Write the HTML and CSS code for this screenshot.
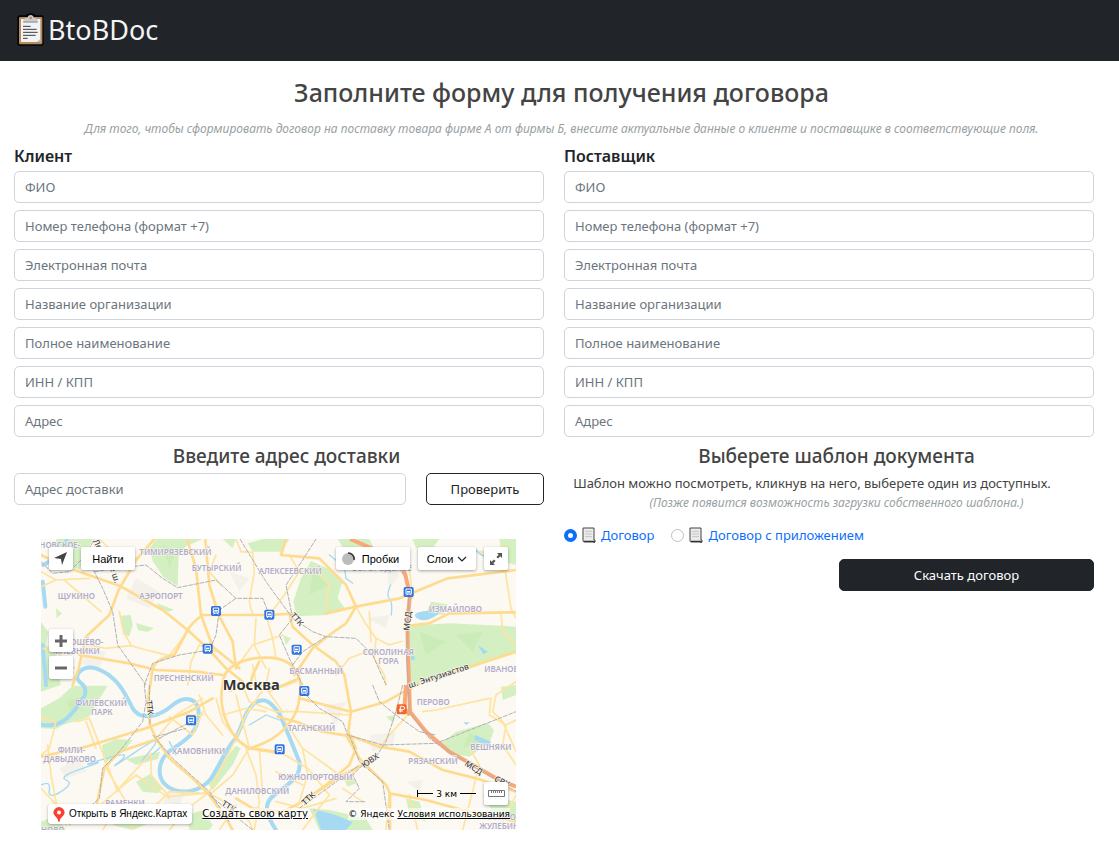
FILE: index.html
```html
<!DOCTYPE html>
<html lang="ru">
<head>
<meta charset="utf-8">
<meta name="viewport" content="width=device-width, initial-scale=1">
<title>BtoBDoc</title>
<link rel="stylesheet" href="styles.css">
</head>
<body>
<header class="navbar">
  <a class="brand" href="#">
    <svg class="brand-icon" viewBox="51 39 81 99" aria-hidden="true">
      <path d="M58 46H76Q82 40 92 40T108 46H126Q131 46 131 52V131Q131 137 125 137H58Q52 137 52 131V52Q52 46 58 46Z" fill="#050505"/>
      <rect x="57" y="51" width="70" height="82" rx="4" fill="#b98a60"/>
      <path d="M63 57H121V126H63Z" fill="#f3f3f4"/>
      <path d="M121 117V126H110Z" fill="#b9bcc0"/>
      <path d="M70 68V60Q70 56 76 55L83 53Q84 45 92 45T101 53L108 55Q113 56 113 60V68Z" fill="#c9cbce"/>
      <path d="M70 66H113" stroke="#8f9398" stroke-width="3"/>
      <circle cx="92" cy="54" r="4" fill="#b98a60"/>
      <path d="M69 79H92M69 88H110M69 97H113M69 106H107M69 115H83" stroke="#3c3f43" stroke-width="3"/>
    </svg>
    <span>BtoBDoc</span>
  </a>
</header>

<main class="page">
  <div class="intro">
    <h1 class="title">Заполните форму для получения договора</h1>
    <p class="hint">Для того, чтобы сформировать договор на поставку товара фирме А от фирмы Б, внесите актуальные данные о клиенте и поставщике в соответствующие поля.</p>
  </div>

  <form class="columns">
    <fieldset class="party">
      <legend class="party-title">Клиент</legend>
      <div class="fields">
        <input class="field" type="text" placeholder="ФИО" aria-label="ФИО клиента">
        <input class="field" type="tel" placeholder="Номер телефона (формат +7)" aria-label="Номер телефона клиента">
        <input class="field" type="email" placeholder="Электронная почта" aria-label="Электронная почта клиента">
        <input class="field" type="text" placeholder="Название организации" aria-label="Название организации клиента">
        <input class="field" type="text" placeholder="Полное наименование" aria-label="Полное наименование клиента">
        <input class="field" type="text" placeholder="ИНН / КПП" aria-label="ИНН / КПП клиента">
        <input class="field" type="text" placeholder="Адрес" aria-label="Адрес клиента">
      </div>
    </fieldset>
    <fieldset class="party">
      <legend class="party-title">Поставщик</legend>
      <div class="fields">
        <input class="field" type="text" placeholder="ФИО" aria-label="ФИО поставщика">
        <input class="field" type="tel" placeholder="Номер телефона (формат +7)" aria-label="Номер телефона поставщика">
        <input class="field" type="email" placeholder="Электронная почта" aria-label="Электронная почта поставщика">
        <input class="field" type="text" placeholder="Название организации" aria-label="Название организации поставщика">
        <input class="field" type="text" placeholder="Полное наименование" aria-label="Полное наименование поставщика">
        <input class="field" type="text" placeholder="ИНН / КПП" aria-label="ИНН / КПП поставщика">
        <input class="field" type="text" placeholder="Адрес" aria-label="Адрес поставщика">
      </div>
    </fieldset>

    <section class="delivery">
      <h2 class="subtitle">Введите адрес доставки</h2>
      <div class="address-row">
        <input class="field" type="text" placeholder="Адрес доставки" aria-label="Адрес доставки">
        <button class="btn btn-outline" type="button">Проверить</button>
      </div>
      <div class="map">
        <svg class="map-canvas" viewBox="15 12 1425 873" role="img" aria-label="Карта Москвы">
          <defs>
            <g id="station"><rect x="-15" y="-15" width="30" height="30" rx="5" fill="#2f72e0"/><path d="M-8-9H8V6H-8ZM-7 10L-3 6M7 10L3 6" fill="none" stroke="#fff" stroke-width="3"/><path d="M-5-3H5V2H-5Z" fill="#fff"/></g>
          </defs>
          <rect x="15" y="12" width="1425" height="873" fill="#fbf9f2"/>
          <g fill="#f4f1ea">
            <path d="M150 330L210 350 190 400 140 390ZM300 130L370 170 340 220 270 190ZM580 110L640 130 610 170ZM1050 90L1090 120 1060 160ZM1000 600L1080 590 1070 630 1010 650ZM70 700L130 670 150 710 90 730ZM400 760L450 770 430 810 380 800ZM1110 740L1160 735 1150 770ZM860 510L930 500 900 570ZM990 250L1060 240 1050 280Z"/>
          </g>
          <g fill="#d4f0c3">
            <path d="M60 12H170L150 60 130 104 105 95 66 52Z"/>
            <path d="M362 12H500L450 34 428 62 425 154 382 126 350 78 340 40Z"/>
            <path d="M635 25L680 12H760L735 50H650Z"/>
            <path d="M255 242L284 240 290 270 280 304 262 300ZM300 264L354 280 334 291 306 285ZM364 205L414 224 398 230 366 218ZM60 220L78 235 62 250Z"/>
            <path d="M15 260L36 290 30 330 62 360 74 450 15 470Z"/>
            <path d="M825 78L885 105 920 135 905 190 930 225 870 240 782 244 772 200 795 130Z"/>
            <path d="M905 12H1000L1020 52 960 62 925 45Z"/>
            <path d="M1120 272L1240 265 1440 275V355L1360 380 1210 434 1120 449Z"/>
            <path d="M1130 12H1210L1190 40 1140 40ZM1390 12H1440V90L1400 80ZM1185 200L1235 208 1225 240 1170 235Z"/>
            <path d="M1208 630L1260 590 1355 564 1374 585 1362 620 1300 665 1245 655Z"/>
            <path d="M1395 455L1440 450V480L1400 495ZM1340 780L1440 800V860L1370 830Z"/>
            <path d="M15 520L70 490 110 452H215L185 500 160 545 80 570 60 582 15 580Z"/>
            <path d="M198 630L240 612 290 615 262 650 205 685ZM300 740L345 716 380 760 365 775 320 770ZM15 860L60 842 90 885H15Z"/>
            <path d="M515 745L560 680 600 632 614 640 590 690 530 765ZM270 672L350 655 372 650 366 672 300 690Z"/>
            <path d="M240 830L330 820 350 860 290 885 230 870ZM455 840L500 825 530 870 520 885H460Z"/>
            <path d="M820 820L880 825 990 850 1010 885H850ZM1110 790L1150 800 1170 860 1120 840ZM925 735L950 728 960 745 935 755Z"/>
            <path d="M560 12L600 12 590 40ZM740 300L765 310 750 330ZM1050 545L1078 540 1072 565Z"/>
          </g>
          <g fill="#bfe5ab" opacity=".4">
            <path d="M1150 290L1230 320 1170 360ZM1260 300L1340 290 1310 350ZM830 110L880 150 820 180ZM1300 590L1340 620 1280 640ZM380 30L420 50 400 100ZM90 500L150 480 110 540Z"/>
          </g>
          <g fill="none" stroke="#a6daf3" stroke-linecap="round" stroke-linejoin="round">
            <path stroke-width="12" d="M22 90Q60 70 76 45T92 12M20 140L28 215M20 330L30 450M15 568C65 580 90 555 112 530C145 490 165 465 130 440C110 420 140 390 180 400C240 420 265 470 290 520C315 560 370 545 410 510C450 478 490 490 488 540C485 600 440 620 398 650C365 680 360 730 395 755C440 785 500 765 525 730C555 685 570 640 598 612C620 570 625 530 655 505C690 480 710 510 730 535C745 570 770 630 790 680C798 730 750 750 715 780C680 805 690 840 720 885"/>
            <path stroke-width="4" d="M880 60L925 95 930 130 950 145M1064 150Q1050 180 1060 190T1066 240M15 750Q45 735 40 765T75 770 90 735 140 700 170 685 210 670 250 680 300 650 340 650 375 635M640 570L690 540 730 555M400 620L420 660"/>
            <path stroke-width="6" d="M1180 45H1320Q1340 70 1370 62M1150 235Q1130 240 1150 250T1205 235"/>
          </g>
          <g fill="#a6daf3"><path d="M1142 238Q1165 220 1198 235 1190 255 1150 252ZM1325 330L1356 350 1342 358ZM1317 600L1365 620 1360 634 1315 615ZM832 822L900 840 950 862 930 885H855ZM1283 562H1302L1290 570ZM1125 362H1136V376H1125Z"/></g>

          <g fill="none" stroke="#ffe3a0" stroke-width="5" stroke-linejoin="round" stroke-linecap="round">
            <path d="M15 155L60 135 160 130M60 135L15 110M85 135L195 230M250 230L262 290 285 330M60 345L110 320 210 340 285 332 330 345 400 362M20 340L60 350 115 400M190 12L240 60 290 95M555 150L520 110 540 60M600 12L615 50 650 52 655 110 640 200 650 240M700 240L745 180 790 110 760 60M400 362L440 310M455 450L465 380 490 330 540 350M660 250L655 330 690 400M690 240L710 310 720 370M600 400L650 330 740 300"/>
            <path d="M790 110L840 105 880 150 870 220M960 215L985 260 1020 310 1060 330 1100 318M1020 310L1015 370 1045 420 1050 450M1120 100L1130 190M1000 230L1005 320M900 420L940 370 1020 340M1400 30L1405 90 1425 220 1440 250M1330 50L1390 60 1400 110M1395 230L1400 290 1440 330"/>
            <path d="M15 660L40 640 60 560 15 550M35 630L45 720 60 800 90 870M120 560L160 550 210 680 245 770M150 560L180 640M180 820L240 770 345 655M245 765L300 720 400 790M205 690L270 800 290 885M345 655L345 720 400 785 500 775M15 760L80 830 150 830M300 870L400 770 510 775M400 885L455 820 515 775M510 770L565 800 640 860 650 885M630 640L660 720 670 800 655 885M600 610L520 770M640 640L720 655M640 640L590 720 520 780M670 640L680 780M540 490L560 560 600 610M490 480L510 540 560 600M400 545L470 600 500 530M430 540L500 540M370 600L420 540 500 490M200 885L240 820M550 885L600 810"/>
            <path d="M720 530L790 530 940 540M745 555L800 640 815 720 790 800M730 650L815 700 880 780M800 640L870 690 935 740M720 710L800 750M880 780L840 830 800 885M935 740L960 700 980 690M1300 640L1330 690 1280 885M1120 535L1060 600 1030 640M1440 650L1400 560 1370 530 1380 480 1440 440M1120 780L1145 885M1060 775L1050 885M1160 530L1200 525 1360 490M1365 490L1360 540 1410 570 1440 555M1410 570L1400 630 1440 690M980 800L920 760M1400 860L1440 780M720 800L800 820 900 790"/>
            <path d="M610 430L640 500 720 530M580 470L640 450 700 450M690 460L740 530M700 400L690 450 630 540 600 610M650 390L660 440 700 470 780 440M560 540L630 520 690 530M600 480L620 560 640 640"/>
          </g>
          <g fill="none" stroke="#ffdb90" stroke-width="8" stroke-linejoin="round" stroke-linecap="round">
            <path d="M15 60L100 100 250 152 380 225 455 285 520 345 570 400 620 440"/>
            <path d="M355 12L300 75 248 165 220 240 150 305 128 400 110 450"/>
            <path d="M453 12L480 100 495 240 530 335 610 400M508 12L520 150 548 240 590 320 600 400"/>
            <path d="M130 360L280 385 360 405 480 410 560 420"/>
            <path d="M770 236L700 240H500Q470 260 455 285L415 360Q360 370 350 400L335 500 342 570 360 610 400 670 470 730 520 780 570 850 590 885"/>
            <path d="M760 236L770 275 830 330 900 380 925 420 945 530 937 590 960 640 940 690 870 750 800 800 740 830 650 820 600 790"/>
            <path d="M735 60L750 12M735 60L850 70 890 110 930 150 960 215 930 265 880 300 830 340 775 420"/>
            <path d="M560 450C560 390 630 365 700 368C770 370 805 420 790 490C785 550 735 615 640 640C580 610 545 520 560 450Z"/>
            <path d="M870 235L960 215 1090 190 1235 130 1440 105M1120 272L1180 265 1240 235 1440 232M790 490L945 530 1050 500 1150 445 1240 415 1440 350"/>
            <path d="M725 545L780 560 860 590 950 605 1030 635 1120 650 1220 705 1320 730 1440 770M930 600L970 670 1050 750 1062 775V885M1060 775L1170 795 1280 825 1440 860M800 800L920 720 1020 670"/>
            <path d="M15 665L150 635 330 580 460 530 530 490M180 820L205 700 250 650 370 610M600 612L640 640 720 650"/>
            <path d="M670 380L650 420 640 460M790 430L720 460"/>
          </g>
          <path fill="none" stroke="#f9a878" stroke-width="12" stroke-linejoin="round" d="M942 12L1030 50 1085 80 1108 120 1122 180 1114 260 1116 360 1122 530 1170 590 1240 650 1320 695 1380 730 1440 755M1110 450L1105 520 1122 540"/>
          <g fill="none" stroke="#b0b0b2" stroke-width="3" stroke-dasharray="14 3">
            <path d="M15 80L50 115 100 110 150 60 175 12M150 60L200 160 230 230 245 330 330 450"/>
            <path d="M175 110L240 100 330 90 380 130 425 158 540 135 600 190H680L700 240M600 190L550 225 540 300 520 345 430 360 350 385 325 450 330 500"/>
            <path d="M612 12L690 140 770 250 830 290 870 305 960 310 1010 360 1050 450M770 250L730 300 760 370 800 450M770 250L750 150 790 90 840 12M870 305L800 350 770 390"/>
            <path d="M330 500L320 560 250 650 200 700 190 790 100 870M370 610L455 565M360 605L450 580M350 600L410 670 520 770 580 860M340 450L342 570"/>
            <path d="M800 470L850 520 920 560 935 600 1040 630 1200 625 1440 530M1080 530L1050 620 1010 680 980 690M940 600L970 680 1040 740 1060 885M980 690L950 720 970 760 930 800 990 800M1010 450L1030 500 1080 540 1150 590 1200 600M1080 530L1100 450"/>
            <path d="M1118 180L1112 360 1120 530 1180 610 1240 652 1320 697 1440 770M790 820L860 770 970 690M520 780L650 885"/>
          </g>

          <g class="map-district">
            <text x="10" y="38">НОВСКОЕ-</text><text x="310" y="59">ТИМИРЯЗЕВСКИЙ</text><text x="467" y="109">БУТЫРСКИЙ</text><text x="668" y="117">АЛЕКСЕЕВСКИЙ</text><text x="948" y="108">БОГОРОДСКОЕ</text><text x="65" y="193">ЩУКИНО</text><text x="310" y="193">АЭРОПОРТ</text><text x="1178" y="231">ИЗМАЙЛОВО</text><text x="55" y="331">ХОРОШЁВО-</text><text x="50" y="357">МНЁВНИКИ</text><text x="980" y="361">СОКОЛИНАЯ</text><text x="1027" y="388">ГОРА</text><text x="760" y="417">БАСМАННЫЙ</text><text x="353" y="438">ПРЕСНЕНСКИЙ</text><text x="1345" y="410">ИВАНОВСКОЕ</text><text x="118" y="512">ФИЛЁВСКИЙ</text><text x="165" y="539">ПАРК</text><text x="1142" y="509">ПЕРОВО</text><text x="755" y="588">ТАГАНСКИЙ</text><text x="65" y="655">ФИЛИ-</text><text x="22" y="682">ДАВЫДКОВО</text><text x="408" y="656">ХАМОВНИКИ</text><text x="1303" y="645">ВЕШНЯКИ</text><text x="1117" y="687">РЯЗАНСКИЙ</text><text x="727" y="734">ЮЖНОПОРТОВЫЙ</text><text x="568" y="777">ДАНИЛОВСКИЙ</text><text x="208" y="812">РАМЕНКИ</text><text x="15" y="895">НОВО-</text><text x="1335" y="855">КОСИНО-</text><text x="1330" y="882">ЖУЛЕБИНО</text>
          </g>
          <g class="map-road">
            <text transform="translate(170 18) rotate(64)">Ленинг</text><text transform="translate(221 98) rotate(72)">е ш.</text><text transform="translate(762 242) rotate(49)">ТТК</text><text transform="translate(1120 288) rotate(-84)">МСД</text><text transform="translate(1120 460) rotate(-18)">ш. Энтузиастов</text><text transform="translate(330 497) rotate(83)">ТТК</text><text transform="translate(984 700) rotate(-35)">ЮВХ</text><text transform="translate(807 812) rotate(-43)">ТТК</text><text transform="translate(1284 690) rotate(32)">МСД</text><text transform="translate(1373 738) rotate(24)">СВХ</text><text transform="translate(555 810) rotate(32)">ТТК</text>
          </g>
          <text class="map-city" x="560" y="464">Москва</text>
          <use href="#station" x="540" y="228"/><use href="#station" x="700" y="239"/><use href="#station" x="515" y="341"/><use href="#station" x="782" y="344"/><use href="#station" x="1118" y="171"/><use href="#station" x="805" y="468"/><use href="#station" x="465" y="556"/><use href="#station" x="731" y="643"/>
          <rect x="1082" y="508" width="30" height="30" rx="5" fill="#f4662b"/><path d="M1093 532V514H1099Q1106 514 1106 519T1099 524H1089M1089 528H1101" fill="none" stroke="#fff" stroke-width="3"/>
        </svg>

        <div class="map-toolbar">
          <button class="map-btn map-square" type="button" aria-label="Моё местоположение"><svg viewBox="0 0 14 14" width="14" height="14"><path d="M0 6L13 0 8 13 7 7Z" fill="#444"/></svg></button>
          <button class="map-btn map-find" type="button">Найти</button>
          <button class="map-btn map-traffic" type="button"><svg viewBox="0 0 14 14" width="14" height="14"><circle cx="7" cy="7" r="6" fill="#bcbcbc"/><path d="M7 1A6 6 0 0 1 13 8" fill="none" stroke="#333" stroke-width="1.6"/></svg>Пробки</button>
          <button class="map-btn map-layers" type="button">Слои<svg viewBox="0 0 10 6" width="10" height="6"><path d="M1 1L5 5 9 1" fill="none" stroke="#222" stroke-width="1.2"/></svg></button>
          <button class="map-btn map-square" type="button" aria-label="Во весь экран"><svg viewBox="0 0 12 12" width="12" height="12"><path d="M12 0V5L10.300 3.300 8 5.600 6.400 4 8.700 1.700 7 0ZM0 12V7L1.700 8.700 4 6.400 5.600 8 3.300 10.300 5 12Z" fill="#555"/></svg></button>
        </div>
        <div class="map-zoom">
          <button class="map-btn map-square" type="button" aria-label="Приблизить"><svg viewBox="0 0 12 12" width="12" height="12"><path d="M0 6H12M6 0V12" stroke="#666" stroke-width="3"/></svg></button>
          <button class="map-btn map-square" type="button" aria-label="Отдалить"><svg viewBox="0 0 12 12" width="12" height="12"><path d="M0 6H12" stroke="#666" stroke-width="3"/></svg></button>
        </div>
        <div class="map-scale">
          <span class="scale-start"></span><span>3 км</span><span class="scale-end"></span>
          <button class="map-btn map-square" type="button" aria-label="Линейка"><svg viewBox="0 0 17 7" width="17" height="7"><path d="M.5.5H16.5V6.5H.5ZM3.5 1V3M5.5 1V3M7.5 1V3M9.5 1V3M11.5 1V3M13.5 1V3" fill="#fff" stroke="#777"/></svg></button>
        </div>
        <div class="map-footer">
          <a class="map-open" href="#"><svg viewBox="0 0 12 15" width="12" height="15"><path d="M6 0A5.6 5.6 0 0 0 .4 5.6C.4 9.4 5 9.8 5.5 15H6.5C7 9.8 11.6 9.4 11.6 5.6A5.6 5.6 0 0 0 6 0Z" fill="#f8402f"/><circle cx="6" cy="5.6" r="2" fill="#fff"/></svg>Открыть в Яндекс.Картах</a>
          <a class="map-create" href="#">Создать свою карту</a>
          <span class="map-copy">© Яндекс <a href="#">Условия использования</a></span>
        </div>
      </div>
    </section>

    <section class="template">
      <h2 class="subtitle">Выберете шаблон документа</h2>
      <p class="template-text">Шаблон можно посмотреть, кликнув на него, выберете один из доступных.</p>
      <p class="hint">(Позже появится возможность загрузки собственного шаблона.)</p>
      <div class="options">
        <div class="option">
          <input class="radio" type="radio" name="template" id="tpl-basic" aria-label="Договор" checked>
          <svg class="doc-icon" viewBox="0 0 42 48" aria-hidden="true"><path d="M3 3H36V39H39V45H7Q3 45 3 40Z" fill="#ececec" stroke="#444" stroke-width="3"/><path d="M9 13H30M9 21H30M9 29H30" stroke="#c4c4c4" stroke-width="3"/><path d="M5 43H34Q34 46 39 45" fill="none" stroke="#333" stroke-width="4"/></svg>
          <a href="#">Договор</a>
        </div>
        <div class="option">
          <input class="radio" type="radio" name="template" id="tpl-annex" aria-label="Договор с приложением">
          <svg class="doc-icon" viewBox="0 0 42 48" aria-hidden="true"><path d="M3 3H36V39H39V45H7Q3 45 3 40Z" fill="#ececec" stroke="#444" stroke-width="3"/><path d="M9 13H30M9 21H30M9 29H30" stroke="#c4c4c4" stroke-width="3"/><path d="M5 43H34Q34 46 39 45" fill="none" stroke="#333" stroke-width="4"/></svg>
          <a href="#">Договор с приложением</a>
        </div>
      </div>
      <button class="btn btn-dark" type="submit">Скачать договор</button>
    </section>
  </form>
</main>
</body>
</html>
```
FILE: styles.css
```css
* { box-sizing: border-box; }

body {
  margin: 0;
  background: #fff;
  color: #212529;
  font: 13px/20px "Noto Sans", "Open Sans", sans-serif;
}

h1, h2, p { margin: 0; }

.navbar {
  display: flex;
  align-items: center;
  height: 61px;
  padding: 0 17px 2px;
  background: #212529;
}

.brand {
  display: flex;
  align-items: center;
  gap: 4px;
  color: #f4f4f4;
  font-size: 27px;
  line-height: 36px;
  text-decoration: none;
}

.brand-icon { width: 27px; height: 33px; }

.page { padding: 13px 10px 13px 14px; }

.intro { text-align: center; }

.title {
  color: #444;
  font-size: 25px;
  font-weight: 500;
  line-height: 36px;
}

.hint {
  color: #999fa3;
  font-size: 12px;
  font-style: italic;
  text-align: center;
}

.intro .hint { margin-top: 9px; }

.columns {
  display: grid;
  grid-template-columns: 1fr 1fr;
  column-gap: 5px;
  margin-top: 7px;
}

.party {
  min-width: 0;
  margin: 0;
  padding: 0 15px 0 0;
  border: 0;
}

.party-title {
  padding: 0;
  font-size: 16px;
  font-weight: 600;
  line-height: 20px;
}

.fields {
  display: grid;
  gap: 7px;
  margin-top: 5px;
}

.field {
  width: 100%;
  min-width: 0;
  height: 32px;
  padding: 0 10px;
  border: 1px solid #ced4da;
  border-radius: 5px;
  background: #fff;
  color: #212529;
  font: inherit;
}

.field::placeholder { color: #6c757d; opacity: 1; }

.subtitle {
  margin-top: 6px;
  color: #444;
  font-size: 19px;
  font-weight: 500;
  line-height: 26px;
  text-align: center;
}

.address-row {
  display: grid;
  grid-template-columns: 1fr 118px;
  gap: 20px;
  margin: 4px 15px 0 0;
}

.btn {
  height: 32px;
  border: 1px solid #212529;
  border-radius: 5px;
  font: inherit;
}

.btn-outline { background: #fff; color: #212529; }

.btn-dark {
  display: block;
  width: 255px;
  margin: 14px 15px 0 auto;
  background: #212529;
  color: #fff;
}

.template-text {
  margin-top: 4px;
  padding-right: 49px;
  color: #444;
  text-align: center;
}

.options {
  display: flex;
  gap: 17px;
  margin-top: 12px;
}

.option { display: flex; align-items: center; gap: 5px; }
.option a { color: #0d6efd; text-decoration: none; }

.radio {
  appearance: none;
  width: 13px;
  height: 13px;
  margin: 0;
  border: 1px solid #bfbfbf;
  border-radius: 50%;
  background: #fff;
}

.radio:checked { border: 4px solid #0d6efd; }

.doc-icon { width: 14px; height: 16px; }

.map {
  position: relative;
  margin: 34px 43px 0 27px;
  overflow: hidden;
  color: #000;
  font: 11px/14px "Liberation Sans", Arial, sans-serif;
}

.map-canvas { display: block; width: 100%; }

.map-district {
  fill: #b1abca;
  stroke: #fbf9f2;
  stroke-width: 3px;
  paint-order: stroke;
  font: 600 24px "Noto Sans", sans-serif;
}

.map-road {
  fill: #444;
  stroke: #fbf9f2;
  stroke-width: 4px;
  paint-order: stroke;
  font: 500 25px "Noto Sans", sans-serif;
}

.map-city {
  fill: #333;
  stroke: #fff;
  stroke-width: 4px;
  paint-order: stroke;
  font: 700 44px "Noto Sans", sans-serif;
}

.map-btn {
  display: flex;
  align-items: center;
  justify-content: center;
  height: 23px;
  padding: 0;
  border: 0;
  border-radius: 2px;
  background: #fff;
  box-shadow: 0 1px 3px rgba(0, 0, 0, .35);
  color: #000;
  font: inherit;
}

.map-square { width: 24px; }
.map-find { width: 54px; }
.map-traffic { width: 74px; gap: 7px; margin-left: auto; padding-right: 6px; }
.map-layers { width: 58px; gap: 4px; }

.map-toolbar {
  position: absolute;
  inset: 8px 8px auto 8px;
  display: flex;
  gap: 8px;
}

.map-zoom {
  position: absolute;
  top: 90px;
  left: 8px;
  display: grid;
  gap: 4px;
}

.map-scale {
  position: absolute;
  right: 8px;
  bottom: 25px;
  display: flex;
  align-items: center;
  gap: 3px;
  font: 9px/12px "DejaVu Sans", sans-serif;
}

.scale-start, .scale-end { width: 16px; border-top: 1px solid #000; }
.scale-start { position: relative; }
.scale-start::before {
  content: "";
  position: absolute;
  top: -4px;
  left: 0;
  height: 7px;
  border-left: 1px solid #000;
}
.scale-end { margin-right: 5px; }

.map-footer {
  position: absolute;
  inset: auto 6px 6px 7px;
  display: flex;
  align-items: center;
  font: 9px/12px "DejaVu Sans", sans-serif;
}

.map-footer a { color: #000; }

.map-footer .map-open {
  display: flex;
  align-items: center;
  gap: 4px;
  height: 20px;
  padding: 0 5px;
  border-radius: 3px;
  background: #fff;
  box-shadow: 0 1px 3px rgba(0, 0, 0, .3);
  font: 10px/14px "Liberation Sans", Arial, sans-serif;
  text-decoration: none;
}

.map-create { margin-left: 10px; background: rgba(255, 255, 255, .6); font-size: 10px; }
.map-copy { margin-left: auto; background: rgba(255, 255, 255, .6); }
```
